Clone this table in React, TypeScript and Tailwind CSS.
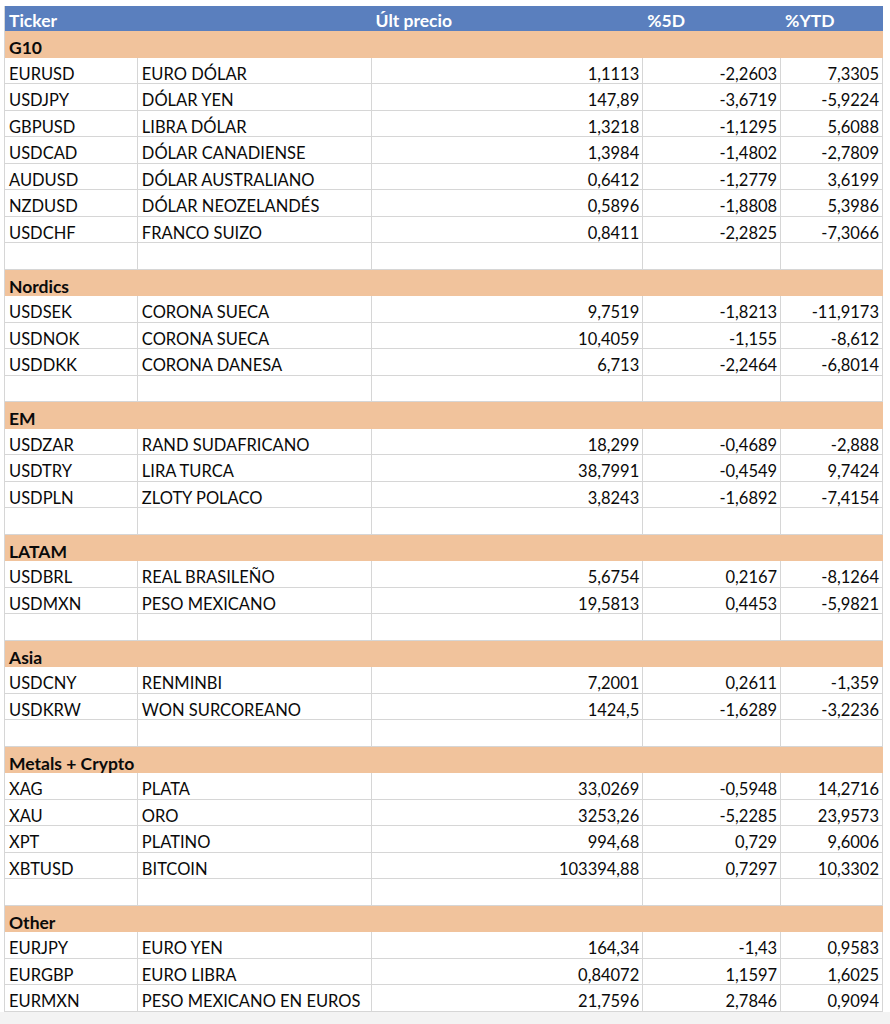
import React from "react";

type Row =
  | { kind: "cat"; label: string }
  | { kind: "data"; t: string; n: string; p: string; d5: string; ytd: string }
  | { kind: "blank" };

const d = (t: string, n: string, p: string, d5: string, ytd: string): Row => ({ kind: "data", t, n, p, d5, ytd });
const c = (label: string): Row => ({ kind: "cat", label });
const b: Row = { kind: "blank" };

const rows: Row[] = [
  c("G10"),
  d("EURUSD", "EURO DÓLAR", "1,1113", "-2,2603", "7,3305"),
  d("USDJPY", "DÓLAR YEN", "147,89", "-3,6719", "-5,9224"),
  d("GBPUSD", "LIBRA DÓLAR", "1,3218", "-1,1295", "5,6088"),
  d("USDCAD", "DÓLAR CANADIENSE", "1,3984", "-1,4802", "-2,7809"),
  d("AUDUSD", "DÓLAR AUSTRALIANO", "0,6412", "-1,2779", "3,6199"),
  d("NZDUSD", "DÓLAR NEOZELANDÉS", "0,5896", "-1,8808", "5,3986"),
  d("USDCHF", "FRANCO SUIZO", "0,8411", "-2,2825", "-7,3066"),
  b,
  c("Nordics"),
  d("USDSEK", "CORONA SUECA", "9,7519", "-1,8213", "-11,9173"),
  d("USDNOK", "CORONA SUECA", "10,4059", "-1,155", "-8,612"),
  d("USDDKK", "CORONA DANESA", "6,713", "-2,2464", "-6,8014"),
  b,
  c("EM"),
  d("USDZAR", "RAND SUDAFRICANO", "18,299", "-0,4689", "-2,888"),
  d("USDTRY", "LIRA TURCA", "38,7991", "-0,4549", "9,7424"),
  d("USDPLN", "ZLOTY POLACO", "3,8243", "-1,6892", "-7,4154"),
  b,
  c("LATAM"),
  d("USDBRL", "REAL BRASILEÑO", "5,6754", "0,2167", "-8,1264"),
  d("USDMXN", "PESO MEXICANO", "19,5813", "0,4453", "-5,9821"),
  b,
  c("Asia"),
  d("USDCNY", "RENMINBI", "7,2001", "0,2611", "-1,359"),
  d("USDKRW", "WON SURCOREANO", "1424,5", "-1,6289", "-3,2236"),
  b,
  c("Metals + Crypto"),
  d("XAG", "PLATA", "33,0269", "-0,5948", "14,2716"),
  d("XAU", "ORO", "3253,26", "-5,2285", "23,9573"),
  d("XPT", "PLATINO", "994,68", "0,729", "9,6006"),
  d("XBTUSD", "BITCOIN", "103394,88", "0,7297", "10,3302"),
  b,
  c("Other"),
  d("EURJPY", "EURO YEN", "164,34", "-1,43", "0,9583"),
  d("EURGBP", "EURO LIBRA", "0,84072", "1,1597", "1,6025"),
  d("EURMXN", "PESO MEXICANO EN EUROS", "21,7596", "2,7846", "0,9094"),
];

const cell = "h-full border-r border-b border-[#d6d6d6] flex items-center overflow-hidden whitespace-nowrap";

export default function App() {
  return (
    <div className="w-[890px] h-[1024px] bg-white flex flex-col text-[#0a0a0a]" style={{ fontFamily: "Lato, 'Liberation Sans', sans-serif" }}>
      <div className="h-[6px] shrink-0" />
      <div className="ml-[4px] w-[879px] flex flex-col text-[16.5px] border-l border-[#d6d6d6]">
        <div className="h-[25px] bg-[#5a7fbe] text-white font-bold text-[17.5px] flex items-center pt-[6px]">
          <div className="w-[133px] pl-[4px]">Ticker</div>
          <div className="w-[234px]" />
          <div className="w-[272px] pl-[4px]">Últ precio</div>
          <div className="w-[138px] pl-[4px]">%5D</div>
          <div className="w-[102px] pl-[4px]">%YTD</div>
        </div>
        {rows.map((r, i) => {
          if (r.kind === "cat") {
            return (
              <div key={i} className="h-[26.5px] bg-[#f1c39c] font-bold text-[17.5px] flex items-center pl-[4px] pt-[8px]">
                {r.label}
              </div>
            );
          }
          if (r.kind === "blank") {
            return (
              <div key={i} className="h-[26.5px] flex">
                <div className={`${cell} w-[133px]`} />
                <div className={`${cell} w-[234px]`} />
                <div className={`${cell} w-[272px]`} />
                <div className={`${cell} w-[138px]`} />
                <div className={`${cell} w-[102px]`} />
              </div>
            );
          }
          return (
            <div key={i} className="h-[26.5px] flex">
              <div className={`${cell} w-[133px] pl-[4px] pt-[8px]`}>{r.t}</div>
              <div className={`${cell} w-[234px] pl-[4px] pt-[8px]`}>{r.n}</div>
              <div className={`${cell} w-[272px] justify-end pr-[3px] pt-[8px]`}>{r.p}</div>
              <div className={`${cell} w-[138px] justify-end pr-[3px] pt-[8px]`}>{r.d5}</div>
              <div className={`${cell} w-[102px] justify-end pr-[3px] pt-[8px]`}>{r.ytd}</div>
            </div>
          );
        })}
      </div>
      <div className="flex-1 bg-[#f3f3f3]" />
    </div>
  );
}
